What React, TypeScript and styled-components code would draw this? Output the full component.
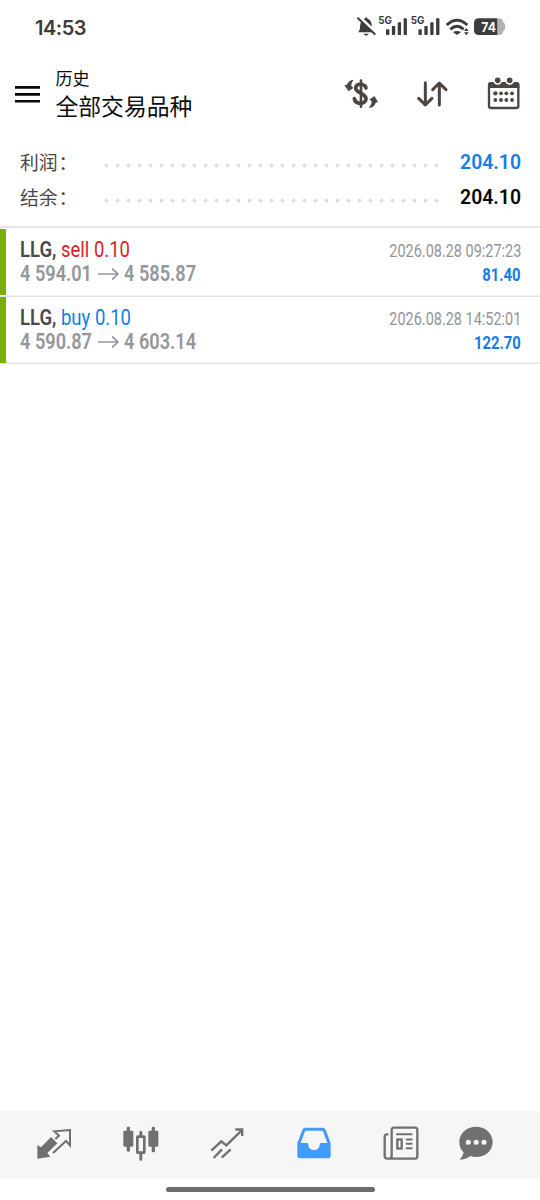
import React from "react";
import styled, { createGlobalStyle } from "styled-components";

const GlobalStyle = createGlobalStyle`
  * { box-sizing: border-box; }
  body { margin: 0; background: #fff; }
`;

const Screen = styled.div`
  display: flex;
  flex-direction: column;
  width: 540px;
  height: 1200px;
  overflow: hidden;
  background: #fff;
  font-family: Roboto, "Noto Sans CJK SC", sans-serif;
`;

const StatusBar = styled.header`
  display: flex;
  align-items: center;
  height: 54px;
  padding: 0 34px 0 35px;
  color: #3c3c3c;
`;

const Clock = styled.time`
  flex: 1;
  font: 600 20px/24px Inter, sans-serif;
  letter-spacing: -0.5px;
  padding-top: 1px;
`;

const StatusIcons = styled.svg`
  display: block;
  width: 152px;
  height: 24px;
  font-family: Inter, sans-serif;
`;

const AppBar = styled.div`
  display: flex;
  align-items: center;
  height: 80px;
  padding: 0 18.3px 0 15px;
  color: #4d4542;
`;

const Titles = styled.div`
  flex: 1;
  margin: 0 0 0 15.5px;
  color: #0c0c0c;
  font-family: "Noto Sans CJK SC", sans-serif;
`;

const Subtitle = styled.div`
  font-size: 17px;
  line-height: 24px;
`;

const Title = styled.div`
  font-size: 22.8px;
  line-height: 32px;
`;

const Actions = styled.div`
  display: flex;
  align-items: center;
  gap: 35.4px;
`;

const Icon = styled.svg`
  display: block;
  flex: none;
`;

const Summary = styled.section`
  height: 94px;
  padding: 11px 19px 0 20px;
  border-bottom: 2px solid #e7e7e7;
`;

const SummaryRow = styled.div`
  display: flex;
  align-items: center;
  height: 35px;
`;

const SummaryLabel = styled.span`
  width: 81px;
  height: 35px;
  color: #484848;
  font: 400 18.8px/33px "Noto Sans CJK SC", sans-serif;
`;

const Colon = styled.span`
  margin-left: 1px;
`;

const Dots = styled.span`
  width: 341px;
  height: 11px;
  margin-top: 6px;
  background: radial-gradient(circle, #dedede 1.5px, transparent 2.3px) 0 0 / 11px 11px;
`;

const SummaryValue = styled.span<{ $color: string }>`
  flex: 1;
  text-align: right;
  color: ${(p) => p.$color};
  font-size: 19.4px;
  font-weight: 600;
  line-height: 35px;
`;

const Deals = styled.main`
  flex: 1;
  padding-top: 1px;
`;

const Deal = styled.article`
  display: flex;
  height: 67.5px;
  padding-right: 19px;
  box-shadow: inset 0 -1.5px #e2e2e2;
`;

const Marker = styled.span`
  width: 5.5px;
  height: 66px;
  margin-right: 14.5px;
  background: #7aae02;
`;

const Column = styled.div<{ $right?: boolean }>`
  display: flex;
  flex: 1;
  flex-direction: column;
  align-items: ${(p) => (p.$right ? "flex-end" : "flex-start")};
  padding-top: ${(p) => (p.$right ? 8 : 9)}px;
`;

/* Roboto narrowed to condensed proportions, anchored to its column edge. */
const Narrow = styled.div<{ $scale: number; $right?: boolean }>`
  transform: scaleX(${(p) => p.$scale});
  transform-origin: ${(p) => (p.$right ? "right" : "left")} center;
  white-space: nowrap;
  height: 24px;
  line-height: 24px;
`;

const DealHead = styled(Narrow)`
  font-size: 21.9px;
  color: #4a4a4c;
  font-weight: 600;
`;

const Side = styled.span<{ $side: string }>`
  color: ${(p) => (p.$side === "sell" ? "#d8232a" : "#0f7fe8")};
  font-weight: 400;
`;

const DealPrices = styled(Narrow)`
  display: flex;
  align-items: center;
  font-size: 21.5px;
  font-weight: 600;
  color: #949799;
`;

const Arrow = styled.svg`
  width: 25px;
  height: 14px;
  margin: 0 6px 0 7px;
`;

const DealTime = styled(Narrow)`
  font-size: 18px;
  color: #959595;
  padding-top: 2px;
`;

const DealProfit = styled(Narrow)`
  font-size: 18px;
  font-weight: 700;
  color: #127ce8;
  padding-top: 2px;
`;

const NavBar = styled.nav`
  display: flex;
  align-items: center;
  gap: 46.6px;
  height: 67.5px;
  padding-left: 34.3px;
  background: #f6f6f6;
  color: #707070;

  & > :last-child { margin-left: -11px; }
`;

const HomeArea = styled.footer`
  display: flex;
  justify-content: center;
  height: 22px;
  padding-top: 8.5px;
`;

const HomeHandle = styled.div`
  width: 209px;
  height: 5px;
  border-radius: 3px;
  background: #6c6c6c;
`;

const deals = [
  { side: "sell", open: "4 594.01", close: "4 585.87", time: "2026.08.28 09:27:23", profit: "81.40" },
  { side: "buy", open: "4 590.87", close: "4 603.14", time: "2026.08.28 14:52:01", profit: "122.70" },
];

const signalBars = (x: number) => (
  <g>
    {[88, 78, 67, 55].map((top, i) => (
      <rect key={top} x={x + i * 17.6} y={top} width={10} height={105 - top} rx={2} />
    ))}
  </g>
);

const NavIcon = ({ x, color, children }: { x: number; color?: string; children: React.ReactNode }) => (
  <Icon width="40" height="40" viewBox={`${x} 73 120 120`} color={color} fill="currentColor">
    {children}
  </Icon>
);

export default function App() {
  return (
    <Screen>
      <GlobalStyle />
      <StatusBar>
        <Clock>14:53</Clock>
        <StatusIcons viewBox="72 45 456 72" fill="currentColor">
          <path d="M84 97C93 90 88 77 93 67C96 60 101 59 103 56C105 51 111 51 113 56C121 59 125 66 125 75C125 86 127 91 132 97Z" />
          <path d="M101 101h15c-2 7-13 7-15 0Z" />
          <path d="M88 52L138 99" stroke="#fff" strokeWidth="11" />
          <path d="M84 55L134 102" stroke="currentColor" strokeWidth="6" strokeLinecap="round" />
          <text x="145" y="72" fontSize="30" fontWeight="700" textLength="41" lengthAdjust="spacingAndGlyphs">5G</text>
          {signalBars(168)}
          <text x="242" y="72" fontSize="30" fontWeight="700" textLength="41" lengthAdjust="spacingAndGlyphs">5G</text>
          {signalBars(265.5)}
          <g fill="none" stroke="currentColor" strokeWidth="8.5">
            <path d="M350 75Q381 46 412 75" />
            <path d="M361 88Q381 70 401 88" />
          </g>
          <path d="M369 96Q381 90 393 96L381 105Z" />
          <path d="M402 93l7-9 7 9zM402 97h14l-7 9z" />
          <path d="M502 55h3c9 0 14 5 14 11 9 3 9 25 0 28 0 7-5 11-14 11h-3Z" fill="#b1b1b1" />
          <path d="M502 55H448C437 55 432 60 432 71V89C432 100 437 105 448 105H502Z" />
          <text x="454" y="96" fontSize="41" fontWeight="700" fill="#fff" textLength="44" lengthAdjust="spacingAndGlyphs">74</text>
        </StatusIcons>
      </StatusBar>

      <AppBar>
        <Icon width="25" height="17" viewBox="0 0 25 17" fill="#080808">
          <path d="M0 .1h25v2.7H0zM0 7.1h25V9.800H0zM0 14h25v2.600H0z" />
        </Icon>
        <Titles>
          <Subtitle>历史</Subtitle>
          <Title>全部交易品种</Title>
        </Titles>
        <Actions>
          <Icon width="36" height="34" viewBox="39 231 108 102" fill="currentColor">
            <path d="M93 242V320" stroke="currentColor" strokeWidth="8" strokeLinecap="round" />
            <path d="M108 264C105 250 78 248 77 264C76 279 110 280 108 297C106 315 76 314 73 296" fill="none" stroke="currentColor" strokeWidth="11" strokeLinecap="round" />
            <path d="M71 239C60 240 53 246 51 254L43 256L56 274L70 264L64 258C64 250 66 245 71 239Z" />
            <path d="M116 323C128 323 135 317 137 308L144 306L133 288L118 299L125 303C125 311 122 317 116 323Z" />
          </Icon>
          <Icon width="36" height="34" viewBox="253 231 108 102" fill="none" stroke="currentColor" strokeWidth="9" strokeLinecap="round" strokeLinejoin="round">
            <path d="M287 248V314M267 295L287 315L307 295M329 315V250M309 269L329 249L349 269" />
          </Icon>
          <Icon width="36" height="34" viewBox="467 231 108 102" fill="currentColor">
            <rect x="476" y="250" width="88" height="74" rx="6" fill="none" stroke="currentColor" strokeWidth="7" />
            <path d="M473 264V254Q473 246 481 246H559Q567 246 567 254V264Z" />
            <g stroke="#fff" strokeWidth="5">
              <circle cx="502" cy="241" r="11" />
              <circle cx="538" cy="241" r="11" />
            </g>
            {[280, 300].map((y) =>
              [495, 512, 528, 545].map((x) => <circle key={`${x}-${y}`} cx={x} cy={y} r={x === 495 && y === 280 ? 6.5 : 5.7} />)
            )}
          </Icon>
        </Actions>
      </AppBar>

      <Summary>
        <SummaryRow>
          <SummaryLabel>利润<Colon>：</Colon></SummaryLabel>
          <Dots />
          <SummaryValue $color="#147ee8">204.10</SummaryValue>
        </SummaryRow>
        <SummaryRow>
          <SummaryLabel>结余<Colon>：</Colon></SummaryLabel>
          <Dots />
          <SummaryValue $color="#080808">204.10</SummaryValue>
        </SummaryRow>
      </Summary>

      <Deals>
        {deals.map((d) => (
          <Deal key={d.time}>
            <Marker />
            <Column>
              <DealHead $scale={0.845}>
                LLG, <Side $side={d.side}>{d.side} 0.10</Side>
              </DealHead>
              <DealPrices $scale={0.845}>
                {d.open}
                <Arrow viewBox="0 0 25 14" fill="none" stroke="currentColor" strokeWidth="1.7">
                  <path d="M0 7H24M17 1.5L24 7L17 12.5" />
                </Arrow>
                {d.close}
              </DealPrices>
            </Column>
            <Column $right>
              <DealTime $scale={0.803} $right>{d.time}</DealTime>
              <DealProfit $scale={0.825} $right>{d.profit}</DealProfit>
            </Column>
          </Deal>
        ))}
      </Deals>

      <NavBar>
        <NavIcon x={103}>
          <path d="M154 112L173 131L143 160L152 171L113 177V136L124 143Z" />
          <path d="M167 118L178 108L164 95L211 91V137L199 124L160 160" fill="none" stroke="currentColor" strokeWidth="6" />
        </NavIcon>
        <NavIcon x={362}>
          <rect x="369" y="93" width="30" height="48" rx="4" />
          <rect x="379" y="81" width="10" height="75" rx="4" />
          <rect x="444" y="93" width="30" height="48" rx="4" />
          <rect x="454" y="81" width="10" height="77" rx="4" />
          <path d="M421.5 98V108M421.5 163V179" stroke="currentColor" strokeWidth="9" strokeLinecap="round" />
          <rect x="411" y="111" width="21" height="48" rx="1" fill="none" stroke="currentColor" strokeWidth="8" />
        </NavIcon>
        <NavIcon x={621}>
          <g fill="none" stroke="currentColor" strokeWidth="7">
            <path d="M634 153L664 125L679 137L725 92M706 89.500H726.500V109M641 175L666 149M665 174L692 149" />
          </g>
        </NavIcon>
        <NavIcon x={71} color="#419bf9">
          <path fillRule="evenodd" d="M106 84H156Q163 84 166 90L181 131V169Q181 176 174 176H88Q81 176 81 169V131L96 90Q99 84 106 84ZM109 93Q105 93 103 97L91 130H110Q114 130 114 135C115 156 147 156 148 135Q148 130 152 130H171L159 97Q157 93 153 93Z" />
        </NavIcon>
        <NavIcon x={332}>
          <g fill="none" stroke="currentColor" strokeWidth="7">
            <path d="M371 84H434Q441 84 441 91V170Q441 177 434 177H351Q343 177 343 169V111Q343 104 350 104H354M364 91Q364 84 371 84M364 90V168Q364 177 355 177" />
            <path d="M380 104H424M409 119.500H424M409 132.500H424M409 146H424" strokeLinecap="round" strokeWidth="6" />
            <rect x="381" y="119.500" width="13" height="27" />
          </g>
        </NavIcon>
        <NavIcon x={559}>
          <path d="M619 81C647 81 669 101 669 127C669 154 646 172 619 172Q610 172 602 169C592 177 581 180 570 180Q580 171 582 158C573 150 569 139 569 127C569 101 591 81 619 81Z" />
          <g fill="#f6f6f6">
            <circle cx="596" cy="127.500" r="7.500" />
            <circle cx="619.500" cy="127.500" r="7.500" />
            <circle cx="643" cy="127.500" r="7.500" />
          </g>
        </NavIcon>
      </NavBar>
      <HomeArea>
        <HomeHandle />
      </HomeArea>
    </Screen>
  );
}
